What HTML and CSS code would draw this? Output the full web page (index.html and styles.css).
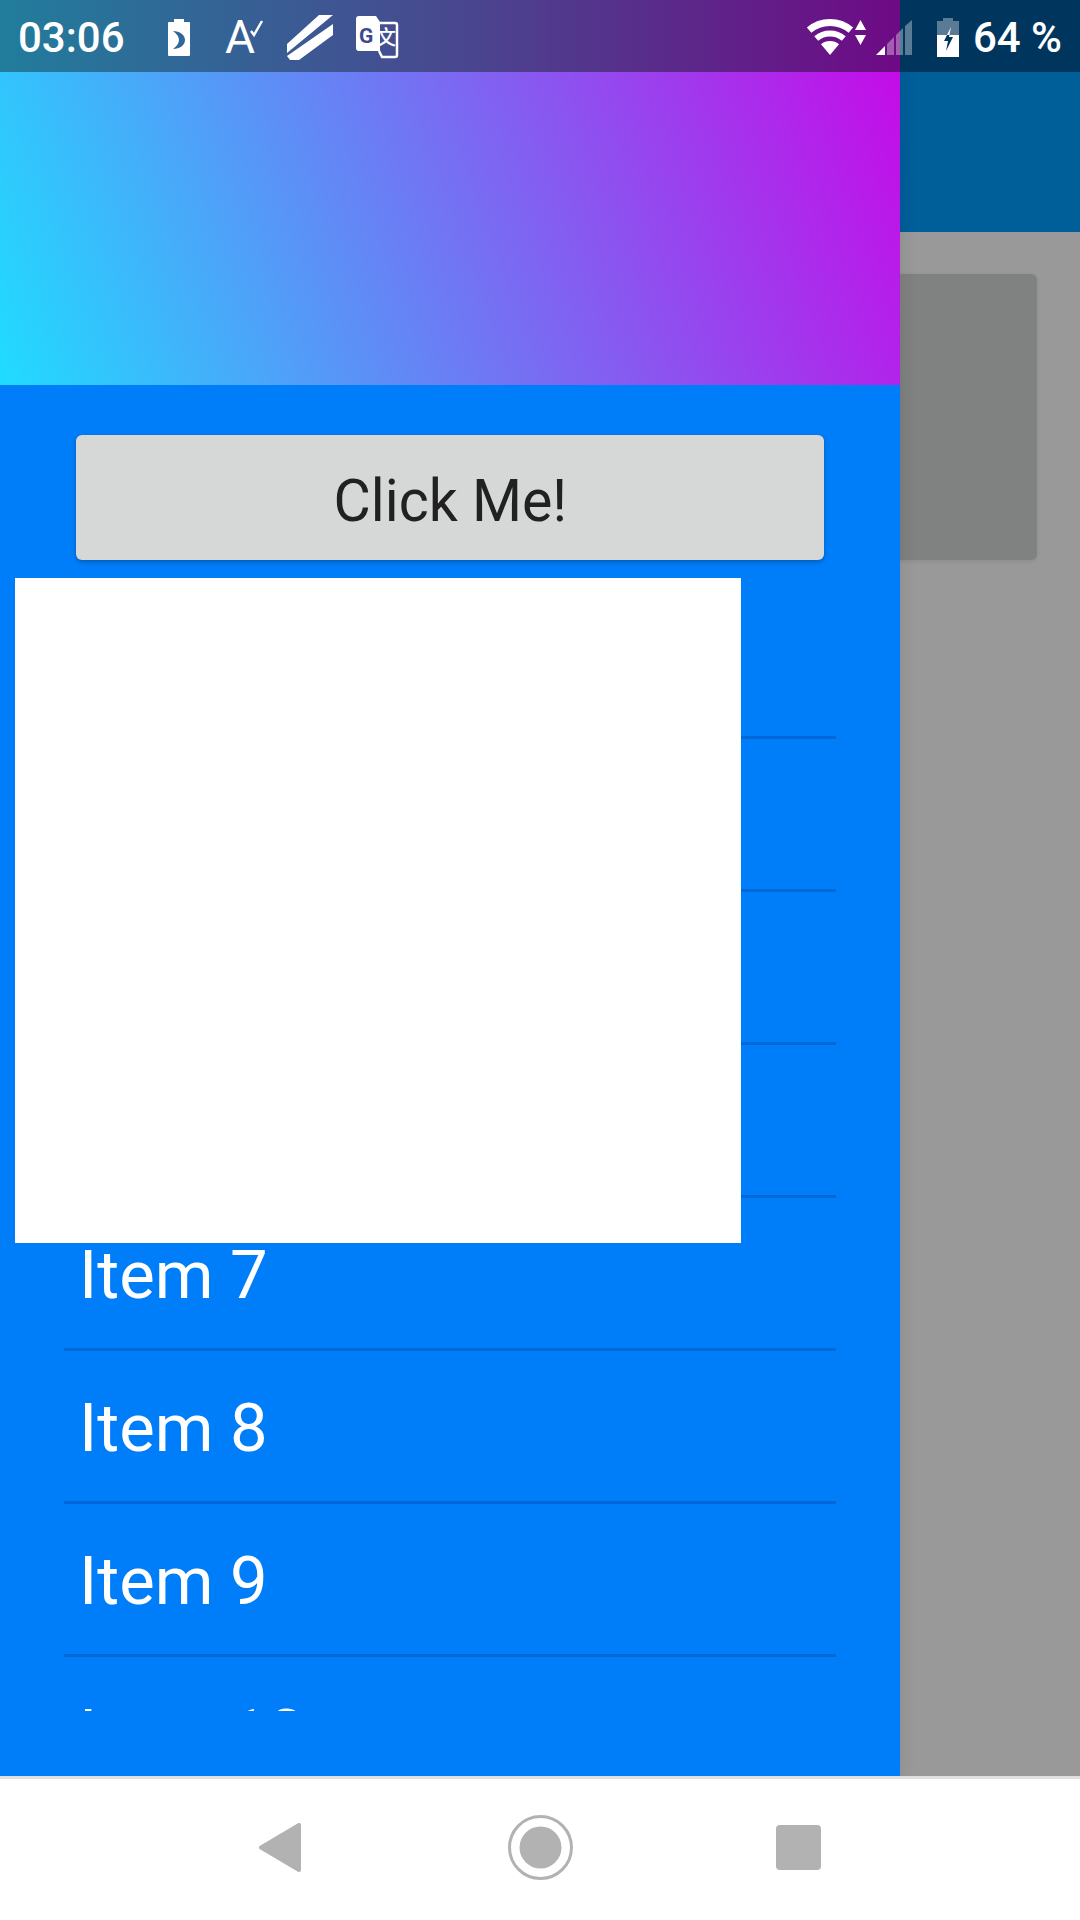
FILE: index.html
```html
<!DOCTYPE html>
<html lang="en">
<head>
    <meta charset="UTF-8">
    <meta name="viewport" content="width=device-width, initial-scale=1.0">
    <title>Drawer Demo</title>
    <link rel="stylesheet" href="styles.css">
</head>
<body>
    <div class="stage">
        <div class="app">
            <div class="app-bar"></div>
            <div class="app-content">
                <div class="app-card"></div>
            </div>
        </div>
        <div class="scrim"></div>

        <div class="drawer">
            <div class="drawer-header"></div>
            <div class="drawer-body">
                <button class="click-button"><span class="click-label">Click Me!</span></button>
                <div class="item-list">
                    <div class="item">Item 3</div>
                    <div class="item">Item 4</div>
                    <div class="item">Item 5</div>
                    <div class="item">Item 6</div>
                    <div class="item">Item 7</div>
                    <div class="item">Item 8</div>
                    <div class="item">Item 9</div>
                    <div class="item">Item 10</div>
                </div>
            </div>
            <div class="white-box"></div>
        </div>

        <div class="status-bar">
            <div class="status-group">
                <span class="clock">03:06</span>
                <svg class="icon-saver" width="22" height="37" viewBox="0 0 22 37">
                    <path fill="#fff" fill-rule="evenodd" d="M6 0h10v3h5q1 0 1 1v32q0 1-1 1H1q-1 0-1-1V4q0-1 1-1h5z M5 12C12 12 17 16 17 21C17 26 12 30 5 30C9 27 11 24 11 21C11 18 9 15 5 12z"/>
                </svg>
                <svg class="icon-spell" width="39" height="34" viewBox="0 0 39 34">
                    <text x="-1" y="33" class="glyph-a">A</text>
                    <path fill="none" stroke="#fff" stroke-width="2.4" d="M25 11l3 4 8-14"/>
                </svg>
                <svg class="icon-stripes" width="46" height="45" viewBox="0 0 46 45">
                    <path fill="#fff" d="M0 29L32 0H46L0 38z M46 9V20L12 45H3L0 41z"/>
                </svg>
                <svg class="icon-translate" width="42" height="42" viewBox="0 0 42 42">
                    <path fill="#fff" d="M3 0H20L24 6V35H3Q0 35 0 32V3Q0 0 3 0z"/>
                    <path fill="none" stroke="#fff" stroke-width="2.5" d="M22 7H39Q41 7 41 9V39Q41 41 39 41H26L23 35"/>
                    <text x="3" y="27" class="glyph-g">G</text>
                    <text x="20" y="29" class="glyph-wen">文</text>
                </svg>
            </div>
            <div class="status-group">
                <svg class="icon-wifi" width="46" height="36" viewBox="0 0 46 36">
                    <path fill="none" stroke="#fff" stroke-width="7" d="M2.1 11.1A32.5 32.5 0 0 1 43.9 11.1"/>
                    <path fill="none" stroke="#fff" stroke-width="6" d="M9.2 19.5A21.5 21.5 0 0 1 36.8 19.5"/>
                    <path fill="#fff" d="M23 36L14 25.3A14 14 0 0 1 32 25.3z"/>
                </svg>
                <svg class="icon-arrows" width="11" height="25" viewBox="0 0 11 25">
                    <path fill="#fff" d="M5.5 0L11 10H0z M0 15H11L5.5 25z"/>
                </svg>
                <svg class="icon-signal" width="36" height="35" viewBox="0 0 36 35">
                    <path fill="#fff" d="M0 35L9 26V35z"/>
                    <path fill="#fff" opacity="0.35" d="M11 24L18 17V35H11z M20 15L27 8V35H20z M29 6L36 0V35H29z"/>
                </svg>
                <svg class="icon-battery" width="22" height="39" viewBox="0 0 22 39">
                    <path fill="#fff" opacity="0.35" d="M6 0H16V3H22V17H0V3H6z"/>
                    <path fill="#fff" d="M0 17H22V39H0z M14 9L10 17H12.4z"/>
                    <path fill="#00355e" d="M10 17L7 23H11L9 33L16 19H12L12.4 17z"/>
                </svg>
                <span class="battery-text">64 %</span>
            </div>
        </div>
    </div>

    <div class="nav-bar">
        <svg width="42" height="49" viewBox="0 0 42 49">
            <path fill="#b2b2b2" stroke="#b2b2b2" stroke-width="4" stroke-linejoin="round" d="M2 24.5L40 2V47z"/>
        </svg>
        <svg class="nav-home" width="65" height="65" viewBox="0 0 65 65">
            <circle cx="32.5" cy="32.5" r="31" fill="none" stroke="#b2b2b2" stroke-width="3"/>
            <circle cx="32.5" cy="32.5" r="21" fill="#b2b2b2"/>
        </svg>
        <div class="nav-square"></div>
    </div>
</body>
</html>
```

FILE: styles.css
```css
:root {
    --drawer-blue: #007df8;
    --divider: #0069d6;
    --nav-icon: #b2b2b2;
}

html, body {
    margin: 0;
    padding: 0;
}

body {
    width: 1080px;
    height: 1920px;
    overflow: hidden;
    display: flex;
    flex-direction: column;
    font-family: Roboto, sans-serif;
    background-color: white;
}

.stage {
    position: relative;
    flex: 1;
    overflow: hidden;
}

.app {
    height: 100%;
    display: flex;
    flex-direction: column;
    background-color: white;
}

.app-bar {
    height: 232px;
    background-color: #009dff;
}

.app-content {
    padding: 42px 43px 0;
}

.app-card {
    height: 286px;
    border-radius: 6px;
    background-color: #d6d8d8;
    box-shadow: 0 1px 4px rgba(0, 0, 0, 0.1);
}

.scrim {
    position: absolute;
    inset: 0;
    background-color: rgba(0, 0, 0, 0.4);
}

.drawer {
    position: absolute;
    top: 0;
    left: 0;
    bottom: 0;
    width: 900px;
    display: flex;
    flex-direction: column;
    background-color: var(--drawer-blue);
    box-shadow: 0 0 16px rgba(0, 0, 0, 0.1);
}

.drawer-header {
    height: 313px;
    margin-top: 72px;
    background-image: linear-gradient(70deg, #20dcff 0%, #c40ce8 100%);
}

.drawer-body {
    display: flex;
    flex-direction: column;
    align-items: center;
    padding-top: 50px;
}

.click-button {
    width: 748px;
    height: 125px;
    padding: 6px 0 0;
    border: none;
    border-radius: 6px;
    background-color: #d6d8d8;
    color: #212121;
    font-family: Roboto, sans-serif;
    font-size: 60px;
    box-shadow: 0 2px 4px rgba(0, 0, 0, 0.25);
}

/* the label is a bit narrower than Roboto at this height */
.click-label {
    display: inline-block;
    transform: scaleX(0.955);
}

.item-list {
    width: 772px;
    height: 1125px;
    margin-top: 26px;
    overflow: hidden;
}

.item {
    box-sizing: border-box;
    border-bottom: 3px solid var(--divider);
    height: 153px;
    padding-left: 15px;
    line-height: 155px;
    color: white;
    font-size: 67px;
}

.white-box {
    position: absolute;
    top: 578px;
    left: 15px;
    width: 726px;
    height: 665px;
    background-color: white;
}

/* darkened cyan to magenta over the drawer, flat navy past its edge */
.status-bar {
    position: absolute;
    top: 0;
    left: 0;
    right: 0;
    height: 72px;
    box-sizing: border-box;
    padding: 2px 18px 0;
    display: flex;
    justify-content: space-between;
    align-items: center;
    background-image: linear-gradient(90deg, #217d9c 0, #48488f 450px, #6e0a85 900px, #00355e 900px);
    color: white;
    font-size: 42px;
}

.status-group {
    display: flex;
    align-items: center;
}

.status-group svg {
    overflow: visible;
}

.clock,
.battery-text {
    font-weight: 500;
}

.icon-saver {
    margin-left: 43px;
}

.icon-spell {
    margin-left: 36px;
}

.icon-stripes {
    margin-left: 22px;
}

.icon-translate {
    margin-left: 23px;
}

.icon-arrows {
    margin-left: 2px;
    margin-bottom: 10px;
}

.icon-signal {
    margin-left: 10px;
}

.icon-battery {
    margin-left: 25px;
}

.battery-text {
    margin-left: 14px;
}

.glyph-a {
    font-family: Roboto, sans-serif;
    font-size: 46px;
    fill: white;
}

.glyph-g {
    font-family: Roboto, sans-serif;
    font-weight: 700;
    font-size: 21px;
    fill: #3c4a8c;
}

.glyph-wen {
    font-family: "Noto Sans CJK SC", sans-serif;
    font-weight: 500;
    font-size: 20px;
    fill: white;
}

.nav-bar {
    height: 144px;
    box-sizing: border-box;
    border-top: 3px solid #e0e0e0;
    padding-bottom: 5px;
    display: flex;
    justify-content: center;
    align-items: center;
    gap: 205px;
    background-color: white;
}

.nav-home {
    margin-left: 2px;
    margin-right: -2px;
}

.nav-square {
    width: 45px;
    height: 45px;
    border-radius: 4px;
    background-color: var(--nav-icon);
}
```
